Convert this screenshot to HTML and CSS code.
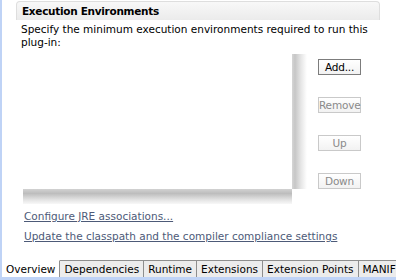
FILE: index.html
```html
<!DOCTYPE html>
<html>
<head>
<meta charset="utf-8">
<link rel="stylesheet" href="styles.css">
</head>
<body>
<div class="frame">
  <div class="content">
    <div class="section">
      <div class="section-header">Execution Environments</div>
      <div class="desc">Specify the minimum execution environments required to run this plug-in:</div>
      <div class="client">
        <div class="table-wrap">
          <div class="table"></div>
          <div class="shadow-right"></div>
          <div class="shadow-bottom"></div>
          <div class="corner"></div>
        </div>
        <div class="buttons">
          <button class="btn btn-active">Add...</button>
          <button class="btn">Remove</button>
          <button class="btn">Up</button>
          <button class="btn">Down</button>
        </div>
      </div>
      <div class="links">
        <a class="link" href="#">Configure JRE associations...</a>
        <a class="link" href="#">Update the classpath and the compiler compliance settings</a>
      </div>
    </div>
  </div>
  <div class="tabs">
    <div class="tab tab-selected">Overview</div>
    <div class="tab">Dependencies</div>
    <div class="tab">Runtime</div>
    <div class="tab">Extensions</div>
    <div class="tab">Extension Points</div>
    <div class="tab tab-last">MANIF</div>
  </div>
  <div class="tabs-strip"></div>
</div>
</body>
</html>
```
FILE: styles.css
```css
html, body {
  margin: 0;
  padding: 0;
  background: #ffffff;
}
body {
  width: 396px;
  height: 280px;
  overflow: hidden;
  font-family: "DejaVu Sans", "Liberation Sans", sans-serif;
  font-size: 11px;
  color: #000;
}
.frame {
  display: flex;
  flex-direction: column;
  height: 280px;
  border-left: 2px solid #bfd3f6;
  box-sizing: border-box;
}
.content {
  flex: 1;
  padding-left: 14px;
  padding-right: 16px;
  overflow: hidden;
}
.section {
  display: flex;
  flex-direction: column;
}
.section-header {
  margin-top: 1px;
  height: 18px;
  line-height: 18px;
  padding-left: 5px;
  font-weight: bold;
  font-size: 10.5px;
  letter-spacing: -0.3px;
  border: 1px solid #dedede;
  border-bottom: none;
  border-radius: 4px 4px 0 0;
  background: linear-gradient(#f8f8f8, #ebebeb);
}
.desc {
  padding: 3px 4px 0 5px;
  line-height: 13px;
  font-size: 10.5px;
}
.client {
  display: flex;
  margin-top: 5px;
}
.table-wrap {
  margin-left: 7px;
  display: grid;
  grid-template-columns: 269px 15px;
  grid-template-rows: 135px 15px;
}
.table {
  background: #fff;
}
.shadow-right {
  background: linear-gradient(to right, #d6d6d6, #c6c6c6 20%, #e6e6e6 60%, #ffffff);
}
.shadow-bottom {
  background: linear-gradient(to bottom, #d2d2d2, #bdbdbd 30%, #e2e2e2 70%, #f8f8f8);
}
.corner {
  background: #fff;
}
.buttons {
  display: flex;
  flex-direction: column;
  gap: 22px;
  margin-left: 11px;
  margin-top: 5px;
}
.btn {
  width: 43px;
  height: 16px;
  padding: 0;
  box-sizing: border-box;
  border: 1px solid #c9c9c9;
  background: linear-gradient(#ffffff, #f2f2f2);
  font-family: inherit;
  font-size: 10.5px;
  letter-spacing: -0.2px;
  color: #8a8a8a;
  line-height: 14px;
  white-space: nowrap;
}
.btn-active {
  border-color: #7c7c7c;
  color: #000;
}
.links {
  display: flex;
  flex-direction: column;
  gap: 7px;
  margin-top: 6px;
  padding-left: 8px;
}
.link {
  line-height: 13px;
  font-size: 10.5px;
  color: #4d5a78;
  text-decoration: underline;
}
.tabs {
  display: flex;
  height: 17px;
  white-space: nowrap;
  overflow: hidden;
}
.tab {
  padding: 0 4px;
  line-height: 16px;
  font-size: 10.5px;
  background: #ececec;
  border-top: 1px solid #8e8e8e;
  border-right: 1px solid #8e8e8e;
  flex-shrink: 0;
}
.tab-selected {
  background: #fff;
  border-top: 1px solid #ffffff;
}
.tab-last {
  flex: 1;
  flex-shrink: 1;
  overflow: hidden;
  border-right: none;
}
.tabs-strip {
  height: 3px;
  background: #bfd3f6;
}
```
